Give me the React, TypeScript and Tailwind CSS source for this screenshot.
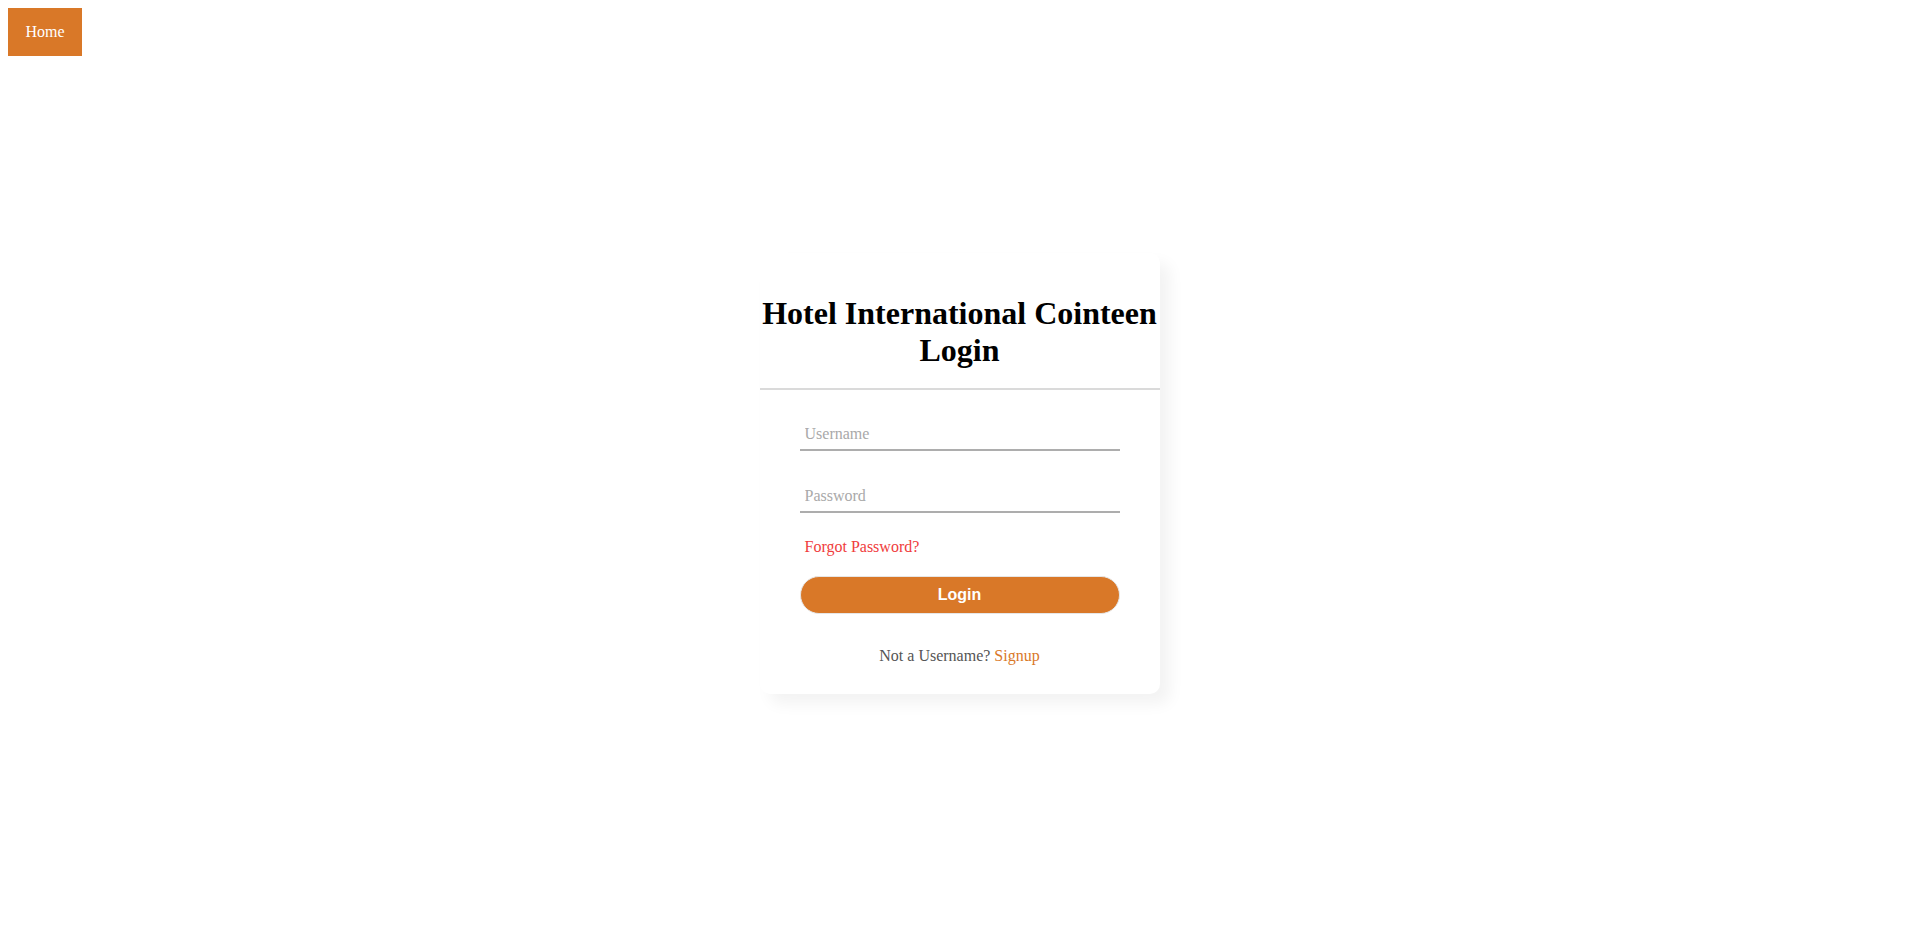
import React from "react";

// Login page
export default function App() {
  return (
    <div className="relative min-h-screen bg-white flex items-center justify-center font-['Liberation_Serif','Times_New_Roman',serif]">
      {/* Home link */}
      <a
        href="#"
        className="absolute left-2 top-2 w-[74px] h-[48px] flex items-center justify-center bg-[#d97828] text-white text-[16px] leading-[18px] no-underline"
      >
        Home
      </a>

      {/* Login card */}
      <div className="w-[400px] h-[441px] mt-[3px] bg-white rounded-[10px] shadow-[10px_10px_15px_rgba(0,0,0,0.05)]">
        <h1 className="pt-[42px] pb-[19px] border-b-2 border-[#dadada] text-center text-[32px] leading-[37px] font-bold text-black">
          Hotel International Cointeen
          <br />
          Login
        </h1>

        <form className="px-[40px] pt-[21px]" onSubmit={(e) => e.preventDefault()}>
          <input
            type="text"
            placeholder="Username"
            className="block w-full h-[40px] pt-[7px] px-[5px] border-b-2 border-[#adadad] text-[16px] outline-none placeholder:text-[#a9a9a9]"
          />
          <input
            type="password"
            placeholder="Password"
            className="block w-full h-[40px] mt-[22px] pt-[7px] px-[5px] border-b-2 border-[#adadad] text-[16px] outline-none placeholder:text-[#a9a9a9]"
          />
          <div className="mt-[25px] pl-[5px] text-[16px] leading-[18px] text-[#f03c3c]">
            Forgot Password?
          </div>
          <button
            type="submit"
            className="mt-[20px] w-full h-[38px] rounded-full border border-[#e6e6e6] bg-[#d97828] text-white text-[16px] font-bold font-['Liberation_Sans',Arial,sans-serif]"
          >
            Login
          </button>
          <p className="mt-[33px] text-center text-[16px] leading-[18px] text-[#555]">
            Not a Username? <span className="text-[#d97828]">Signup</span>
          </p>
        </form>
      </div>
    </div>
  );
}
